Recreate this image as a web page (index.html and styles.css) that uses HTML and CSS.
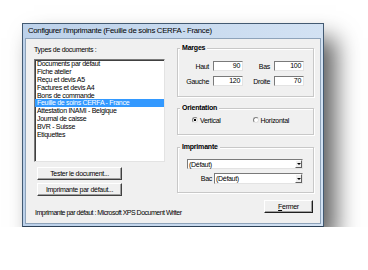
FILE: index.html
```html
<!DOCTYPE html>
<html lang="fr">
<head>
    <meta charset="UTF-8">
    <title>Configurer l'imprimante</title>
    <link rel="stylesheet" href="styles.css">
</head>
<body>

    <div class="dialog">
        <div class="titlebar">Configurer l'imprimante (Feuille de soins CERFA - France)</div>

        <div class="client">
            <div class="main">
                <!-- Document types -->
                <div class="left">
                    <div class="caption">Types de documents :</div>
                    <ul class="listbox">
                        <li>Documents par défaut</li>
                        <li>Fiche atelier</li>
                        <li>Reçu et devis A5</li>
                        <li>Factures et devis A4</li>
                        <li>Bons de commande</li>
                        <li class="selected">Feuille de soins CERFA - France</li>
                        <li>Attestation INAMI - Belgique</li>
                        <li>Journal de caisse</li>
                        <li>BVR - Suisse</li>
                        <li>Etiquettes</li>
                    </ul>
                    <button class="btn btn-wide">Tester le document...</button>
                    <button class="btn btn-wide btn-next">Imprimante par défaut...</button>
                </div>

                <!-- Settings -->
                <div class="right">
                    <div class="group group-margins">
                        <span class="group-title">Marges</span>
                        <div class="margins">
                            <span class="field-label">Haut</span>
                            <div class="field">90</div>
                            <span class="field-label">Bas</span>
                            <div class="field">100</div>
                            <span class="field-label">Gauche</span>
                            <div class="field">120</div>
                            <span class="field-label">Droite</span>
                            <div class="field">70</div>
                        </div>
                    </div>

                    <div class="group group-orientation">
                        <span class="group-title">Orientation</span>
                        <div class="radios">
                            <div class="radio-option">
                                <span class="radio checked"></span>
                                <span>Vertical</span>
                            </div>
                            <div class="radio-option">
                                <span class="radio"></span>
                                <span>Horizontal</span>
                            </div>
                        </div>
                    </div>

                    <div class="group group-printer">
                        <span class="group-title">Imprimante</span>
                        <div class="combo combo-printer">
                            <span>(Défaut)</span>
                            <span class="combo-btn"><span class="arrow"></span></span>
                        </div>
                        <div class="tray-row">
                            <span>Bac</span>
                            <div class="combo combo-tray">
                                <span>(Défaut)</span>
                                <span class="combo-btn"><span class="arrow"></span></span>
                            </div>
                        </div>
                    </div>
                </div>
            </div>

            <div class="footer">
                <span class="status">Imprimante par défaut : Microsoft XPS Document Writer</span>
                <button class="btn btn-close"><u>F</u>ermer</button>
            </div>
        </div>
    </div>

</body>
</html>
```

FILE: styles.css
```css
* {
    box-sizing: border-box;
}

body {
    margin: 0;
    background-color: #fff;
    font-family: "Liberation Sans", Arial, sans-serif;
    font-size: 7px;
    letter-spacing: -0.3px;
    color: #000;
}

.dialog {
    margin: 23px 0 0 22px;
    width: 302px;
    height: 204px;
    display: flex;
    flex-direction: column;
    padding: 0 2px 2px;
    border: 1px solid #435a72;
    border-bottom-color: #2c4056;
    background: linear-gradient(to right, #bcd1ea, #d3e2f3);
    box-shadow: 12px 15px 22px rgba(0, 0, 0, 0.62);
}

.titlebar {
    height: 14px;
    line-height: 14px;
    padding-left: 3px;
    font-size: 7.8px;
    white-space: nowrap;
}

.client {
    flex: 1;
    background-color: #f0f0f0;
    border: 1px solid #8ea3ba;
    padding: 7px 6px 0 8px;
}

.main {
    display: flex;
    gap: 12px;
    height: 150px;
}

/* Left column */
.left {
    width: 131px;
    display: flex;
    flex-direction: column;
}

.caption {
    line-height: 8px;
    height: 8px;
}

.listbox {
    margin: 5px 0 0;
    padding: 0;
    list-style: none;
    height: 103px;
    background-color: #fff;
    border: 1px solid;
    border-color: #7a7a7a #e3e3e3 #e3e3e3 #7a7a7a;
    box-shadow: inset 1px 1px 0 #404040;
}

.listbox li {
    line-height: 7.9px;
    height: 7.9px;
    padding-left: 2px;
    white-space: nowrap;
}

.listbox li.selected {
    background-color: #3399ff;
    color: #fff;
}

.btn {
    appearance: none;
    font: inherit;
    letter-spacing: inherit;
    color: #000;
    padding: 0;
    height: 13px;
    background-color: #f0f0f0;
    border: 1px solid;
    border-color: #fff #404040 #404040 #fff;
    box-shadow: inset -1px -1px 0 #a0a0a0;
}

.btn-wide {
    width: 85px;
    margin: 5px 0 0 3px;
}

.btn-next {
    margin-top: 3px;
}

/* Right column */
.right {
    width: 137px;
    margin-top: 2px;
}

.group {
    position: relative;
    border: 1px solid #c8c8c8;
    box-shadow: inset 1px 1px 0 #fff, 1px 1px 0 #fff;
}

.group-title {
    position: absolute;
    top: -5px;
    left: 2px;
    padding: 0 2px;
    line-height: 8px;
    font-weight: bold;
    letter-spacing: -0.2px;
    background-color: #f0f0f0;
}

.group-margins {
    padding: 12px 0 10px;
}

.margins {
    display: grid;
    grid-template-columns: 31px 30px 23px 30px;
    grid-auto-rows: 10px;
    column-gap: 4px;
    row-gap: 5px;
    align-items: center;
}

.field-label {
    text-align: right;
}

.field {
    height: 10px;
    line-height: 8px;
    text-align: right;
    padding-right: 2px;
    background-color: #fff;
    border: 1px solid;
    border-color: #7a7a7a #e3e3e3 #e3e3e3 #7a7a7a;
}

.group-orientation {
    margin-top: 11px;
    padding: 7px 0 10px 14px;
}

.radios {
    display: flex;
    height: 8px;
}

.radio-option {
    width: 63px;
    display: flex;
    align-items: center;
    gap: 2px;
}

.radio {
    width: 6px;
    height: 6px;
    border-radius: 50%;
    background-color: #fff;
    border: 1px solid;
    border-color: #808080 #e0e0e0 #e0e0e0 #808080;
}

.radio.checked {
    background: radial-gradient(circle, #000 0 1.2px, #fff 1.6px);
}

.group-printer {
    margin-top: 12px;
    padding: 11px 10px 8px 9px;
}

.combo {
    display: flex;
    align-items: center;
    padding-left: 1px;
    background-color: #fff;
    border: 1px solid;
    border-color: #7a7a7a #e3e3e3 #e3e3e3 #7a7a7a;
}

.combo-printer {
    height: 10px;
}

.tray-row {
    display: flex;
    justify-content: flex-end;
    align-items: center;
    gap: 2px;
    margin-top: 4px;
}

.combo-tray {
    width: 89px;
    height: 11px;
}

.combo-btn {
    margin-left: auto;
    width: 7px;
    height: 100%;
    display: flex;
    align-items: center;
    justify-content: center;
    background-color: #f0f0f0;
    border: 1px solid;
    border-color: #fff #606060 #606060 #fff;
}

.arrow {
    width: 0;
    height: 0;
    border-left: 2px solid transparent;
    border-right: 2px solid transparent;
    border-top: 2px solid #000;
}

/* Footer */
.footer {
    display: flex;
    justify-content: space-between;
    align-items: flex-start;
    margin-top: 4px;
}

.status {
    margin: 9px 0 0 1px;
    line-height: 8px;
    letter-spacing: -0.5px;
    white-space: nowrap;
}

.btn-close {
    width: 49px;
    margin-right: 1px;
    border-color: #fff #202020 #202020 #fff;
}
```
